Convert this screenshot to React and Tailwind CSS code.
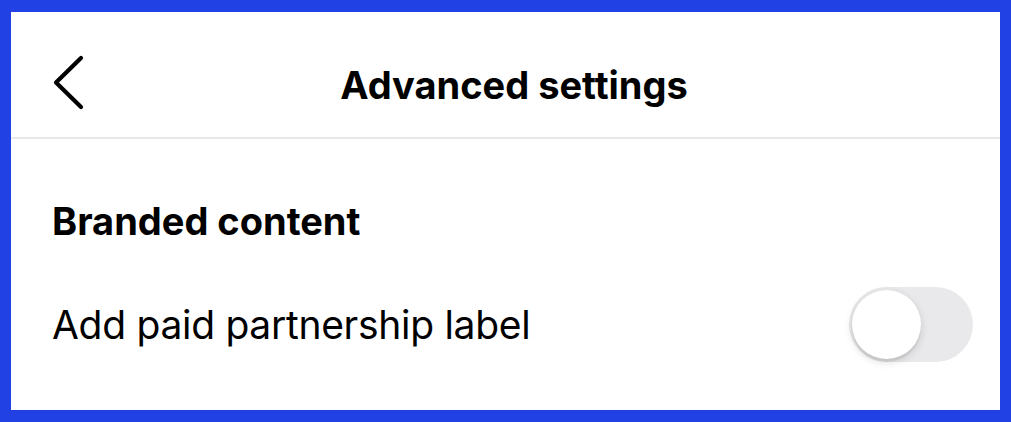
export default function App() {
  return (
    <div className="w-[1011px] h-[422px] bg-[#2141e5] pt-[12px] pb-[12px] pl-[11px] pr-[11px]" style={{ fontFamily: 'Inter, "Noto Sans", sans-serif' }}>
      <div className="w-full h-full bg-white flex flex-col">
        <div className="h-[127px] border-b-2 border-[#e8e8e8] grid grid-cols-[1fr_auto_1fr] items-start">
          <div className="pl-[41px] pt-[42px] flex items-center">
            <svg width="34" height="57" viewBox="0 0 34 57" fill="none">
              <path d="M29 4 L4 28.5 L29 53" stroke="#000" strokeWidth="4.2" strokeLinecap="round" strokeLinejoin="round" />
            </svg>
          </div>
          <div className="text-[38px] leading-[46px] font-bold text-black pt-[50px] pl-[17px]">Advanced settings</div>
          <div />
        </div>
        <div className="pl-[41px] pr-[27px] pt-[59px]">
          <div className="text-[38px] leading-[46px] font-bold text-black">Branded content</div>
          <div className="mt-[43px] flex items-center justify-between">
            <div className="text-[39px] leading-[47px] text-black tracking-[-0.3px]">Add paid partnership label</div>
            <div className="w-[124px] h-[75px] rounded-full bg-[#e9e9eb] p-[3px] flex items-center">
              <div className="w-[69px] h-[69px] rounded-full bg-white shadow-[0_3px_8px_rgba(0,0,0,0.15),0_3px_1px_rgba(0,0,0,0.06)]" />
            </div>
          </div>
        </div>
      </div>
    </div>
  );
}
